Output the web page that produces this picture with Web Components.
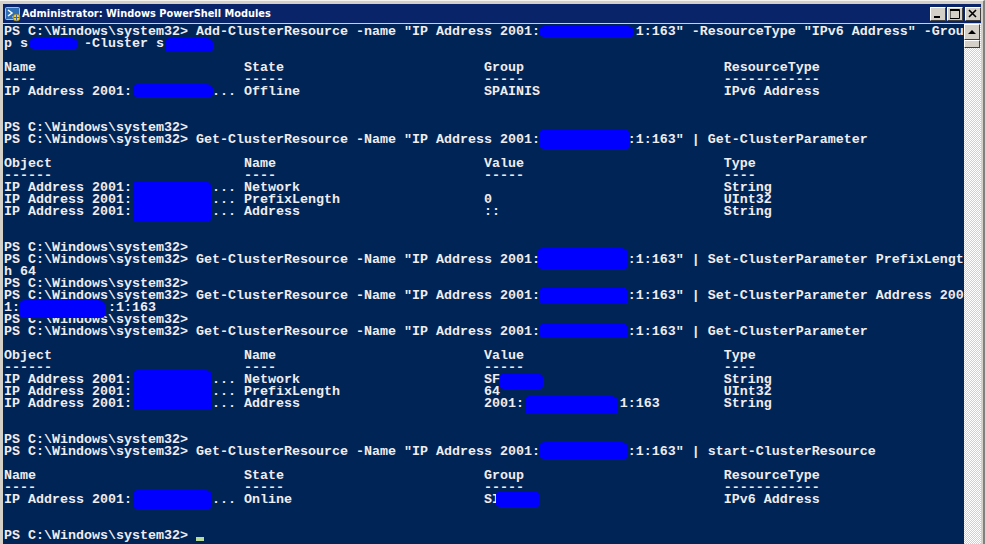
<!DOCTYPE html>
<html>
<head>
<meta charset="utf-8">
<title>Administrator: Windows PowerShell Modules</title>
<style>
    html, body { margin: 0; padding: 0; background: #d4d0c8; }
</style>
</head>
<body>
<template id="js-ps-window">
    <style>
        :host {
            display: flex;
            flex-direction: column;
            width: 985px;
            height: 544px;
            box-sizing: border-box;
            padding: 3px 2px 0 3px;
            background: #d4d0c8;
            border-top: 1px solid #f4f3ef;
            border-right: 2px solid #808080;
            overflow: hidden;
        }
        .body {
            display: flex;
            flex: 1;
            min-height: 0;
            margin-top: 1px;
            background: #fff;
        }
    </style>
    <ps-titlebar></ps-titlebar>
    <div class="body">
        <slot></slot>
        <ps-scrollbar></ps-scrollbar>
    </div>
</template>

<template id="js-ps-titlebar">
    <style>
        :host {
            display: flex;
            align-items: center;
            height: 19px;
            flex: none;
            background: #0a246a;
            color: #fff;
            font: bold 10.9px "DejaVu Sans", "Liberation Sans", sans-serif;
            font-stretch: condensed;
            padding: 0 0 0 2px;
        }
        svg { flex: none; margin-right: 1px; }
        .text { flex: 1; white-space: pre; }
        .btns { display: flex; gap: 0; }
        .btn {
            width: 16px;
            height: 14px;
            margin-left: 1px;
            background: #d4d0c8;
            box-sizing: border-box;
            border: 1px solid;
            border-color: #fff #404040 #404040 #fff;
            display: flex;
            align-items: center;
            justify-content: center;
        }
        .btn + .btn.close { margin-left: 2px; }
    </style>
    <svg width="16" height="16" viewBox="0 0 16 16">
        <rect x="0.5" y="1.5" width="14" height="12" rx="1" fill="#2f6fb5" stroke="#9cc3e6"/>
        <path d="M3 4l4 3-4 3" fill="none" stroke="#fff" stroke-width="1.5"/>
        <path d="M7 11h3" stroke="#dce8f5"/>
        <circle cx="11.5" cy="11.5" r="3.5" fill="#f3cf3a" stroke="#8a6d10" stroke-width="0.6"/>
        <path d="M11.5 8.500v6M8.500 11.500h6" stroke="#3a66b8" stroke-width="1"/>
    </svg>
    <span class="text">Administrator: Windows PowerShell Modules</span>
    <div class="btns">
        <div class="btn"><svg width="10" height="10" viewBox="0 0 10 10" style="margin:0"><rect x="1" y="7" width="6" height="2" fill="#000"/></svg></div>
        <div class="btn"><svg width="10" height="10" viewBox="0 0 10 10" style="margin:0"><path d="M0 .5h9.500v9h-9.500zM0 1.500h9.500" fill="none" stroke="#000"/></svg></div>
        <div class="btn close"><svg width="10" height="10" viewBox="0 0 10 10" style="margin:0"><path d="M1 1l7 7M8 1l-7 7" stroke="#000" stroke-width="1.600"/></svg></div>
    </div>
</template>

<template id="js-ps-scrollbar">
    <style>
        :host {
            display: flex;
            flex-direction: column;
            flex: none;
            width: 17px;
            background-color: #fff;
            background-image: conic-gradient(#d4d0c8 25%, #fff 0 50%, #d4d0c8 0 75%, #fff 0);
            background-size: 2px 2px;
        }
        .arrow, .thumb {
            box-sizing: border-box;
            width: 16px;
            height: 16px;
            background: #d4d0c8;
            border: 1px solid;
            border-color: #fff #404040 #404040 #fff;
            display: flex;
            align-items: center;
            justify-content: center;
            flex: none;
        }
        .thumb { height: 8px; }
        .tri {
            width: 0;
            height: 0;
            border: 4px solid transparent;
            border-top: 0;
            border-bottom: 4px solid #000;
        }
    </style>
    <div class="arrow"><div class="tri"></div></div>
    <div class="thumb"></div>
</template>

<template id="js-ps-console">
    <style>
        :host {
            display: block;
            position: relative;
            flex: none;
            width: 961px;
            padding: 2px 0 0 1px;
            box-sizing: border-box;
            background: #012456;
            color: #eeedf0;
            font: bold 13.34px/12px "Liberation Mono", "DejaVu Sans Mono", monospace;
            overflow: hidden;
        }
    </style>
    <slot></slot>
</template>

<template id="js-ps-line">
    <style>
        :host {
            display: block;
            height: 12px;
        }
        slot { white-space: pre; }
    </style>
    <slot></slot>
</template>

<template id="js-ps-redact">
    <style>
        :host {
            position: absolute;
            background: #0000ff;
            border-radius: 5px 8px 4px 7px / 3px 5px 4px 2px;
        }
    </style>
</template>

<template id="js-ps-cursor">
    <style>
        :host {
            display: inline-block;
            white-space: normal;
            width: 8px;
            height: 4px;
            background: #b8dc9c;
            vertical-align: -2px;
        }
    </style>
</template>

<ps-window>
    <ps-console>
        <ps-line>PS C:\Windows\system32> Add-ClusterResource -name "IP Address 2001:            1:163" -ResourceType "IPv6 Address" -Grou</ps-line>
        <ps-line>p s       -Cluster s</ps-line>
        <ps-line></ps-line>
        <ps-line>Name                          State                         Group                         ResourceType</ps-line>
        <ps-line>----                          -----                         -----                         ------------</ps-line>
        <ps-line>IP Address 2001:          ... Offline                       SPAINIS                       IPv6 Address</ps-line>
        <ps-line></ps-line>
        <ps-line></ps-line>
        <ps-line>PS C:\Windows\system32></ps-line>
        <ps-line>PS C:\Windows\system32> Get-ClusterResource -Name "IP Address 2001:           :1:163" | Get-ClusterParameter</ps-line>
        <ps-line></ps-line>
        <ps-line>Object                        Name                          Value                         Type</ps-line>
        <ps-line>------                        ----                          -----                         ----</ps-line>
        <ps-line>IP Address 2001:          ... Network                                                     String</ps-line>
        <ps-line>IP Address 2001:          ... PrefixLength                  0                             UInt32</ps-line>
        <ps-line>IP Address 2001:          ... Address                       ::                            String</ps-line>
        <ps-line></ps-line>
        <ps-line></ps-line>
        <ps-line>PS C:\Windows\system32></ps-line>
        <ps-line>PS C:\Windows\system32> Get-ClusterResource -Name "IP Address 2001:           :1:163" | Set-ClusterParameter PrefixLengt</ps-line>
        <ps-line>h 64</ps-line>
        <ps-line>PS C:\Windows\system32></ps-line>
        <ps-line>PS C:\Windows\system32> Get-ClusterResource -Name "IP Address 2001:           :1:163" | Set-ClusterParameter Address 200</ps-line>
        <ps-line>1:           :1:163</ps-line>
        <ps-line>PS C:\Windows\system32></ps-line>
        <ps-line>PS C:\Windows\system32> Get-ClusterResource -Name "IP Address 2001:           :1:163" | Get-ClusterParameter</ps-line>
        <ps-line></ps-line>
        <ps-line>Object                        Name                          Value                         Type</ps-line>
        <ps-line>------                        ----                          -----                         ----</ps-line>
        <ps-line>IP Address 2001:          ... Network                       SF                            String</ps-line>
        <ps-line>IP Address 2001:          ... PrefixLength                  64                            UInt32</ps-line>
        <ps-line>IP Address 2001:          ... Address                       2001:            1:163        String</ps-line>
        <ps-line></ps-line>
        <ps-line></ps-line>
        <ps-line>PS C:\Windows\system32></ps-line>
        <ps-line>PS C:\Windows\system32> Get-ClusterResource -Name "IP Address 2001:           :1:163" | start-ClusterResource</ps-line>
        <ps-line></ps-line>
        <ps-line>Name                          State                         Group                         ResourceType</ps-line>
        <ps-line>----                          -----                         -----                         ------------</ps-line>
        <ps-line>IP Address 2001:          ... Online                        SI                            IPv6 Address</ps-line>
        <ps-line></ps-line>
        <ps-line></ps-line>
        <ps-line>PS C:\Windows\system32> <ps-cursor></ps-cursor></ps-line>

        <ps-redact box="540 26 94 11"></ps-redact>
        <ps-redact box="30 38 48 11"></ps-redact>
        <ps-redact box="165 38 48 14"></ps-redact>
        <ps-redact box="133 84 80 13"></ps-redact>
        <ps-redact box="540 129 90 20"></ps-redact>
        <ps-redact box="133 181 78 41"></ps-redact>
        <ps-redact box="538 248 90 21"></ps-redact>
        <ps-redact box="540 287 88 17"></ps-redact>
        <ps-redact box="20 300 85 18"></ps-redact>
        <ps-redact box="540 323 88 15"></ps-redact>
        <ps-redact box="133 370 79 40"></ps-redact>
        <ps-redact box="500 373 43 16"></ps-redact>
        <ps-redact box="525 396 93 18"></ps-redact>
        <ps-redact box="540 442 88 17"></ps-redact>
        <ps-redact box="133 490 79 19"></ps-redact>
        <ps-redact box="496 491 44 16"></ps-redact>
    </ps-console>
</ps-window>

<script type="text/javascript">
    // each element just clones its template into an open shadow root
    class TemplatedElement extends HTMLElement {
        constructor() {
            super();
            const template = document.querySelector('#js-' + this.localName);
            this.attachShadow({ mode: 'open' }).appendChild(template.content.cloneNode(true));
        }
    }

    class PsRedact extends TemplatedElement {
        connectedCallback() {
            // box is in page pixels, console starts at 3,24
            const [x, y, w, h] = this.getAttribute('box').split(' ').map(Number);
            this.style.left = (x - 3) + 'px';
            this.style.top = (y - 24) + 'px';
            this.style.width = w + 'px';
            this.style.height = h + 'px';
        }
    }

    ['ps-window', 'ps-titlebar', 'ps-scrollbar', 'ps-console', 'ps-line', 'ps-cursor'].forEach((name) => {
        window.customElements.define(name, class extends TemplatedElement {});
    });
    window.customElements.define('ps-redact', PsRedact);
</script>
</body>
</html>
